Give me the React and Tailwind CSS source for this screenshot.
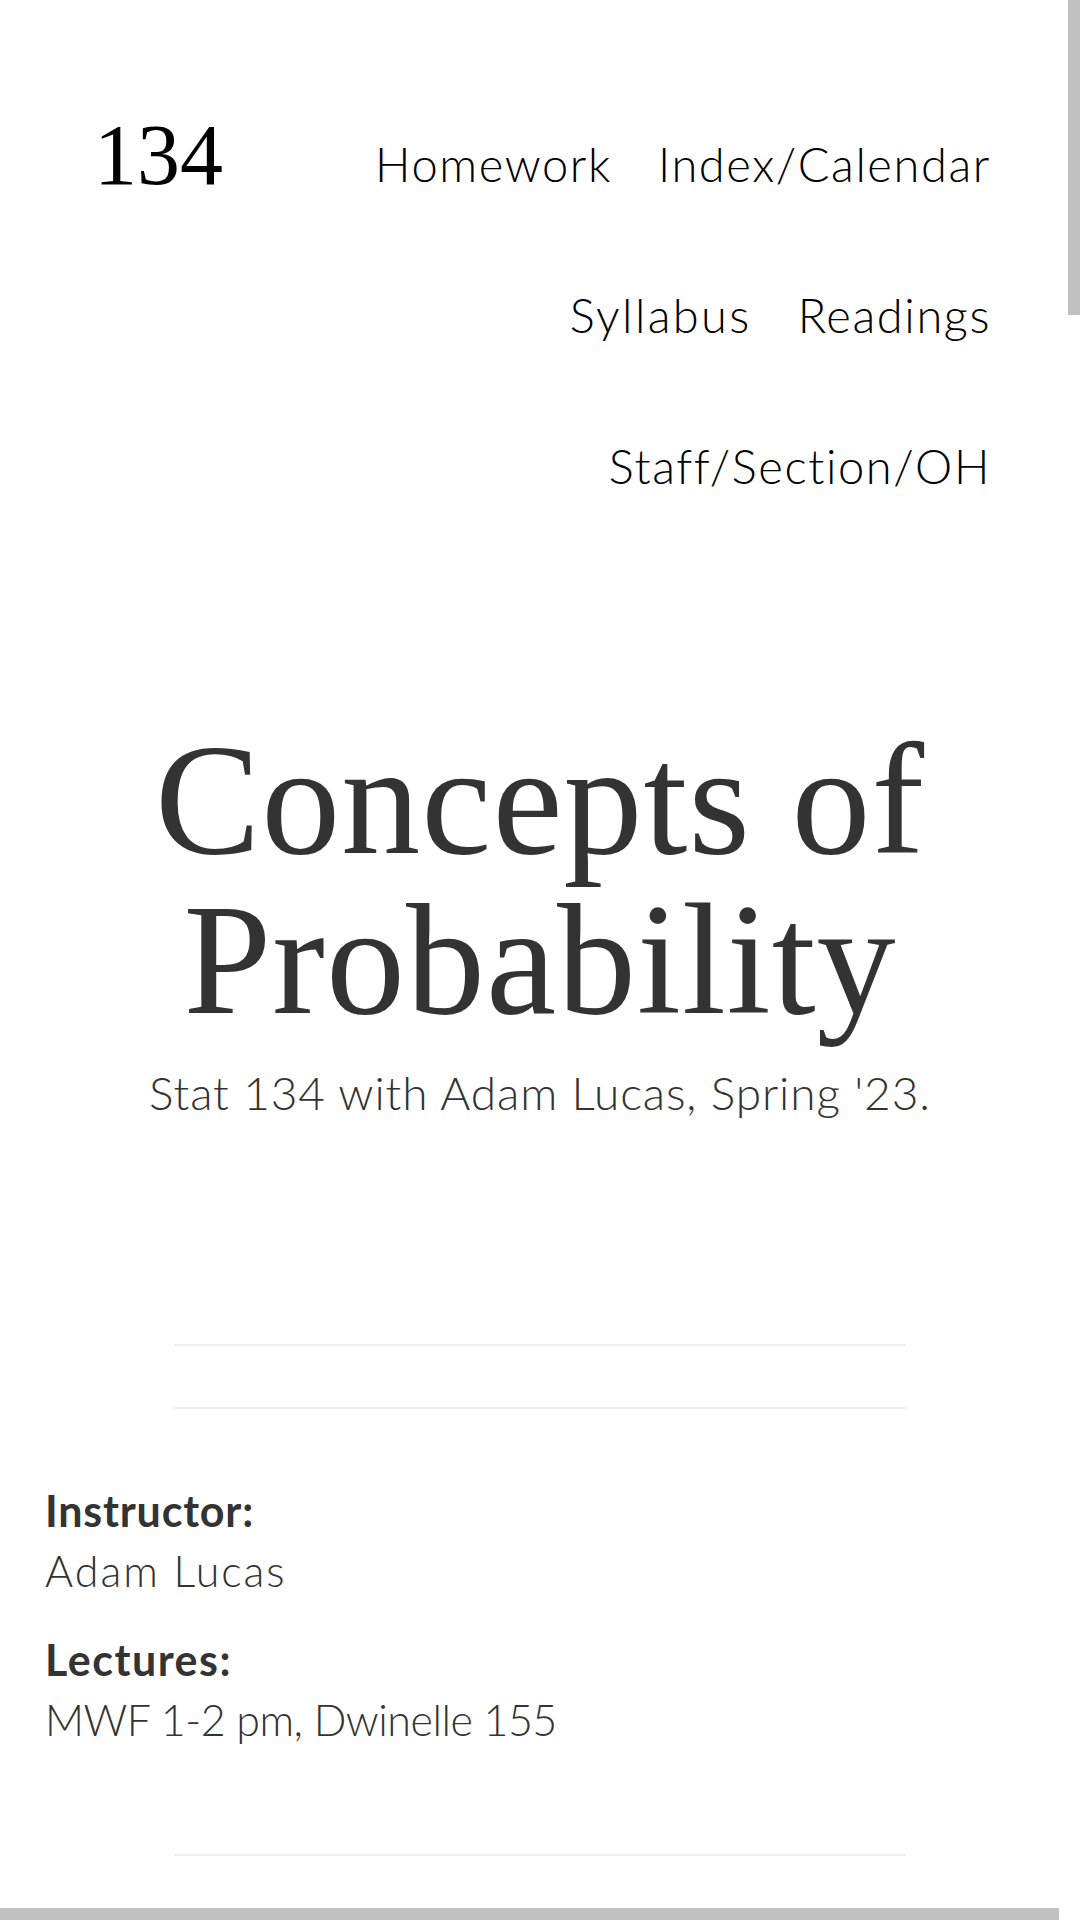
import React from "react";

const sans = { fontFamily: '"Lato", "Open Sans", sans-serif' };

export default function App() {
  return (
    <div className="relative w-[1080px] h-[1920px] overflow-hidden bg-white">
      <div className="flex flex-col w-[1080px]">
        {/* Header */}
        <header className="flex justify-between pt-[89px] pl-[94px] pr-[89px]">
          <div
            className="mt-[23px] text-[86px] leading-none text-black"
            style={{ fontFamily: '"Liberation Serif", serif' }}
          >
            134
          </div>
          <nav className="flex flex-col items-end font-light text-[47px] tracking-[1.6px] text-black" style={sans}>
            <div className="flex justify-end gap-[46px] h-[151px] leading-[151px]">
              <span>Homework</span>
              <span>Index/Calendar</span>
            </div>
            <div className="flex justify-end gap-[46px] h-[151px] leading-[151px]">
              <span className="tracking-[2.4px]">Syllabus</span>
              <span>Readings</span>
            </div>
            <div className="flex justify-end gap-[46px] h-[151px] leading-[151px]">
              <span>Staff/Section/OH</span>
            </div>
          </nav>
        </header>

        {/* Title */}
        <h1
          className="mt-[178px] text-center text-[158px] leading-[160px] tracking-[1px] text-[#333]"
          style={{ fontFamily: '"Liberation Serif", serif' }}
        >
          Concepts of
          <br />
          Probability
        </h1>
        <p
          className="mt-[25px] text-center text-[46px] leading-[55px] font-light tracking-[0.9px] text-[#333]"
          style={sans}
        >
          Stat 134 with Adam Lucas, Spring '23.
        </p>

        <div className="mt-[224px] mx-auto w-[732px] h-[2px] bg-[#eeeeee]" />
        <div className="mt-[61px] mx-auto w-[732px] h-[2px] bg-[#eeeeee]" />

        <div className="mt-[72px] pl-[45px] text-[43px] leading-[60px] text-[#333]" style={sans}>
          <div className="font-bold tracking-[0.8px]">Instructor:</div>
          <div className="font-light tracking-[2px]">Adam Lucas</div>
          <div className="mt-[29px] font-bold tracking-[1.5px]">Lectures:</div>
          <div className="font-light tracking-[-0.5px]">MWF 1-2 pm, Dwinelle 155</div>
        </div>

        <div className="mt-[104px] mx-auto w-[732px] h-[2px] bg-[#eeeeee]" />
      </div>

      {/* Fake scrollbars */}
      <div className="absolute top-0 right-0 w-[12px] h-[1908px] bg-white">
        <div className="w-[12px] h-[315px] bg-[#c1c1c1]" />
      </div>
      <div className="absolute bottom-0 left-0 w-[1080px] h-[12px] bg-white">
        <div className="w-[1059px] h-[12px] bg-[#c1c1c1]" />
      </div>
    </div>
  );
}
